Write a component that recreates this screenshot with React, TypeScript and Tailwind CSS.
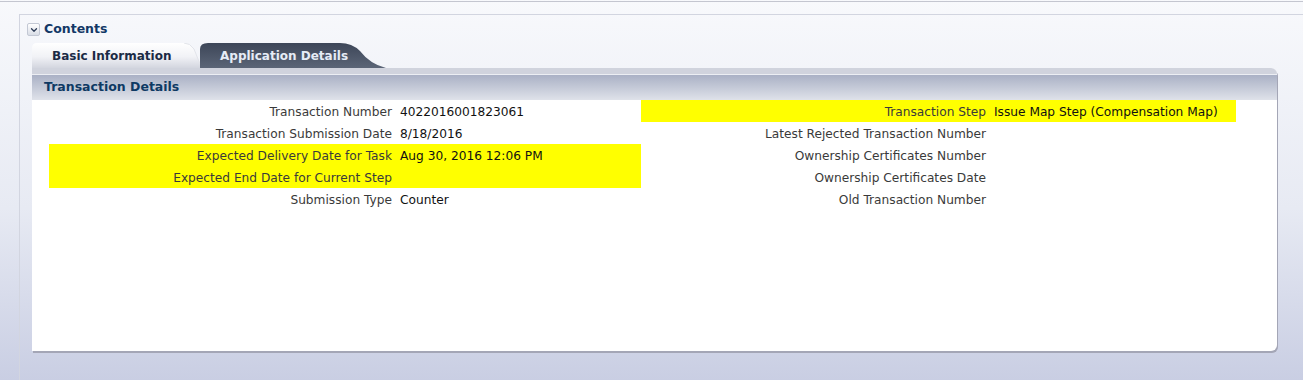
import { ChevronDown } from 'lucide-react';

const leftRows = [
  { label: 'Transaction Number', value: '4022016001823061' },
  { label: 'Transaction Submission Date', value: '8/18/2016' },
  { label: 'Expected Delivery Date for Task', value: 'Aug 30, 2016 12:06 PM', hi: true },
  { label: 'Expected End Date for Current Step', value: '', hi: true },
  { label: 'Submission Type', value: 'Counter' },
];

const rightRows = [
  { label: 'Transaction Step', value: 'Issue Map Step (Compensation Map)', hi: true },
  { label: 'Latest Rejected Transaction Number', value: '' },
  { label: 'Ownership Certificates Number', value: '' },
  { label: 'Ownership Certificates Date', value: '' },
  { label: 'Old Transaction Number', value: '' },
];

type Row = { label: string; value: string; hi?: boolean };

function FieldColumn({ rows, width, labelWidth }: { rows: Row[]; width: string; labelWidth: string }) {
  return (
    <div className={`flex flex-col ${width}`}>
      {rows.map((r) => (
        <div key={r.label} className={`flex h-[22px] items-center pt-[2px] ${r.hi ? 'bg-[#ffff00]' : ''}`}>
          <span className={`${labelWidth} shrink-0 text-right text-[#3a3a3a]`}>{r.label}</span>
          <span className="ml-2 whitespace-nowrap text-[#111]">{r.value}</span>
        </div>
      ))}
    </div>
  );
}

export default function App() {
  return (
    <div className="relative h-[380px] w-[1303px] overflow-hidden bg-gradient-to-b from-[#f8f9fc] via-[#e7eaf3] via-55% to-[#c9cee3] font-['DejaVu_Sans',sans-serif] text-[12.2px]">
      <div className="mt-[1px] h-[2px] border-t border-[#c4c6d0]" />

      <div className="ml-[19px] mt-[11px] h-[400px] border-l border-t border-[#d2d5e0] pl-[7px]">
        <div className="flex h-[28px] items-center gap-[4px] pt-[1px]">
          <div className="flex h-[13px] w-[13px] items-center justify-center rounded-[2px] border border-[#c3c8d4] bg-gradient-to-b from-white to-[#d9dde6]">
            <ChevronDown className="h-[10px] w-[10px] text-[#2b3a55]" strokeWidth={3} />
          </div>
          <span className="text-[12.5px] font-bold text-[#133866]">Contents</span>
        </div>

        <div className="ml-[5px] flex h-[25px] items-end">
          <div className="relative h-[25px] w-[170px]">
            <svg className="absolute inset-0" width="170" height="25" viewBox="0 0 170 25">
              <defs>
                <linearGradient id="selTab" x1="0" y1="0" x2="0" y2="1">
                  <stop offset="0" stopColor="#ffffff" />
                  <stop offset="0.55" stopColor="#f1f2f6" />
                  <stop offset="1" stopColor="#d3d6df" />
                </linearGradient>
              </defs>
              <path d="M0 25 V5 Q0 0 5 0 H152 Q158 0 162 6 L170 25 Z" fill="url(#selTab)" />
              <path d="M152 0 Q158 0 162 6 L168 21" stroke="#e2e4ea" fill="none" />
            </svg>
            <span className="relative flex h-full items-center pl-[20px] text-[12px] font-bold text-[#1b2b45]">
              Basic Information
            </span>
          </div>
          <div className="relative -ml-[2px] h-[25px] w-[186px]">
            <svg className="absolute inset-0" width="186" height="25" viewBox="0 0 186 25">
              <defs>
                <linearGradient id="darkTab" x1="0" y1="0" x2="0" y2="1">
                  <stop offset="0" stopColor="#3d4658" />
                  <stop offset="1" stopColor="#5b6577" />
                </linearGradient>
              </defs>
              <path d="M0 25 V6 Q0 0 8 0 H140 Q152 0 160 8 Q170 21 186 25 Z" fill="url(#darkTab)" />
            </svg>
            <span className="relative flex h-full items-center pl-[20px] text-[12px] font-bold text-[#e6ecf6]">
              Application Details
            </span>
          </div>
        </div>

        <div className="ml-[5px] h-[283px] w-[1245px] rounded-tr-[6px] rounded-br-[6px] bg-white shadow-[1px_2px_0_#a4a6b6]">
          <div className="rounded-tr-[6px] bg-[#d0d3dd] pt-[6px]">
            <div className="h-[1px] bg-[#eceef3]" />
            <div className="flex h-[25px] items-center bg-gradient-to-b from-[#aab1c5] to-[#dfe2ea] pl-[12px]">
              <span className="text-[12.5px] font-bold text-[#0e3963]">Transaction Details</span>
            </div>
          </div>
          <div className="flex pl-[17px]">
            <FieldColumn rows={leftRows} width="w-[592px]" labelWidth="w-[343px]" />
            <FieldColumn rows={rightRows} width="w-[595px]" labelWidth="w-[345px]" />
          </div>
        </div>
      </div>
    </div>
  );
}
